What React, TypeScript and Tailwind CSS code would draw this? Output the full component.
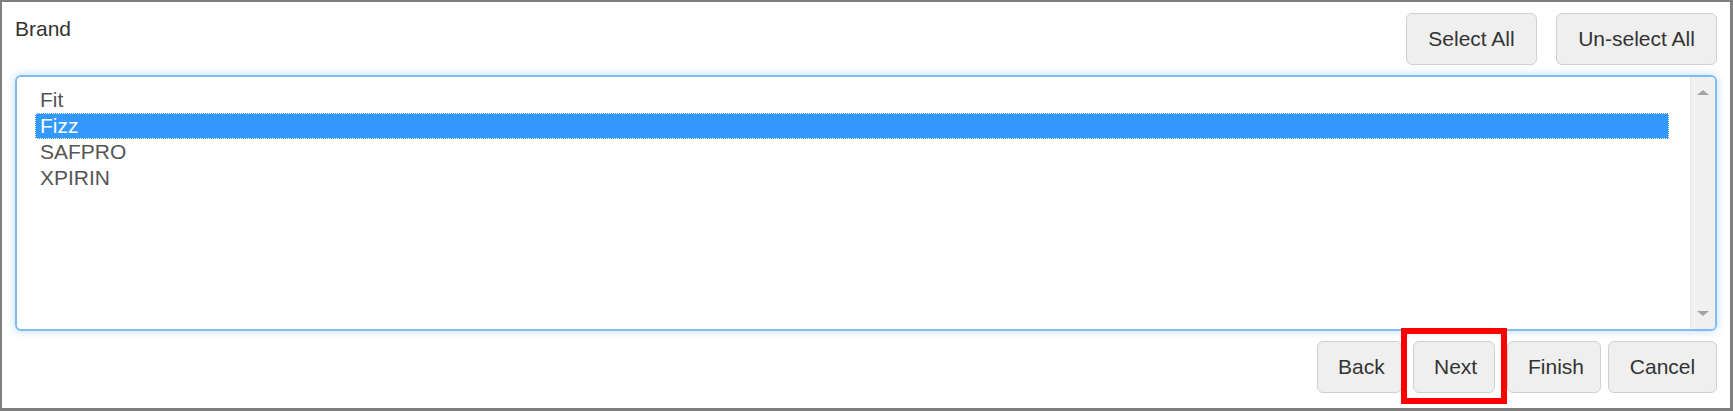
import React from 'react'

const brands = ['Fit', 'Fizz', 'SAFPRO', 'XPIRIN']

function Btn({ children, className = '' }: { children: React.ReactNode; className?: string }) {
  return (
    <button
      className={`h-[52px] rounded-[6px] border border-[#d0d0d0] bg-[#efefef] px-[20px] text-[21px] text-[#333] ${className}`}
    >
      {children}
    </button>
  )
}

export default function App() {
  const selected = 'Fizz'

  return (
    <div
      className="flex h-[411px] w-[1733px] flex-col border-2 border-r-[3px] border-b-[3px] border-[#7f7f7f] bg-white px-[13px] pt-[11px] text-[21px] text-[#333]"
      style={{ fontFamily: '"Liberation Sans", Arial, sans-serif' }}
    >
      {/* Header */}
      <div className="flex items-start justify-between">
        <label className="mt-[1px] leading-[30px]">Brand</label>
        <div className="flex gap-[19px]">
          <Btn className="w-[131px] px-0">Select All</Btn>
          <Btn className="w-[161px] px-0">Un-select All</Btn>
        </div>
      </div>

      {/* Listbox */}
      <div className="mt-[10px] flex h-[256px] rounded-[6px] border-2 border-[#7fbaf0] shadow-[0_0_10px_rgba(102,175,233,0.45)]">
        <div className="flex-1 pt-[10px] pr-[21px] pl-[18px] text-[#555]">
          {brands.map((b) => (
            <div
              key={b}
              className={`h-[26px] pl-[5px] leading-[26px] ${
                b === selected
                  ? 'bg-[#3399ff] text-white outline-1 outline-dotted outline-white -outline-offset-1'
                  : ''
              }`}
            >
              {b}
            </div>
          ))}
        </div>
        <div className="flex w-[25px] flex-col items-center justify-between rounded-r-[4px] border-l border-[#e6e6e6] bg-[#f0f0f0] py-[13px]">
          <div className="h-0 w-0 border-x-[6px] border-b-[5px] border-x-transparent border-b-[#a3a3a3]" />
          <div className="h-0 w-0 border-x-[6px] border-t-[5px] border-x-transparent border-t-[#a3a3a3]" />
        </div>
      </div>

      {/* Footer */}
      <div className="mt-[10px] flex justify-end">
        <Btn className="w-[85px] px-0">Back</Btn>
        <div className="relative ml-[11px]">
          <Btn className="w-[82px] px-0">Next</Btn>
          <span className="pointer-events-none absolute -top-[13px] -right-[12px] -bottom-[11px] -left-[12px] border-[6px] border-[#ff0000]" />
        </div>
        <Btn className="ml-[12px] w-[94px] px-0">Finish</Btn>
        <Btn className="ml-[7px] w-[109px] px-0">Cancel</Btn>
      </div>
    </div>
  )
}
